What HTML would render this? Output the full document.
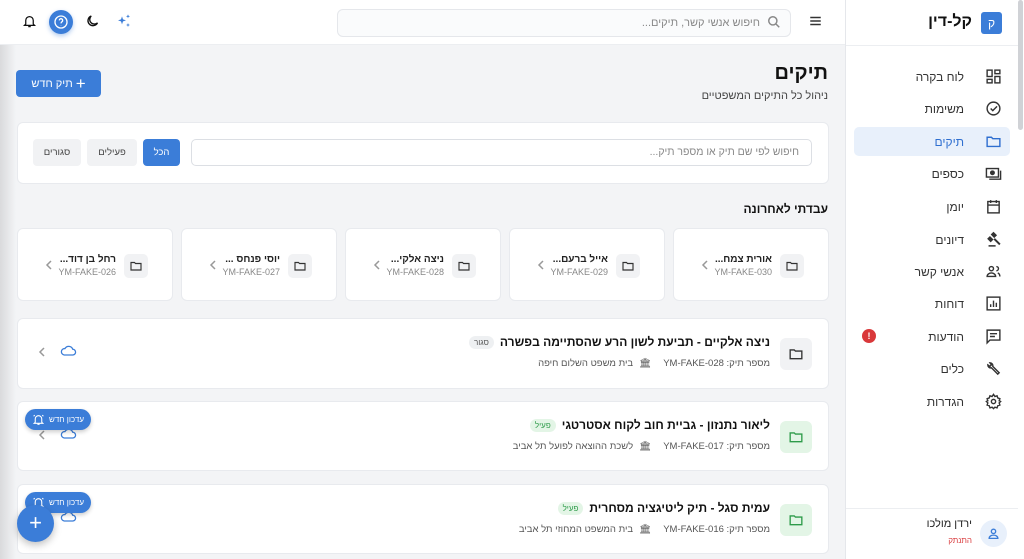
<!DOCTYPE html>
<html dir="rtl"><head><meta charset="utf-8"><style>
*{box-sizing:border-box;margin:0;padding:0}
body{width:1024px;height:559px;overflow:hidden;background:#f3f4f6;font-family:"Liberation Sans","Noto Sans CJK SC",sans-serif;color:#1f2937;position:relative}
.a{position:absolute}
.card{position:absolute;background:#fff;border:1px solid #e8eaee;border-radius:6px}
svg{display:block}
.nav{position:absolute;right:14px;width:156px;height:29px;display:flex;align-items:center;font-size:12px;color:#333}
.nav svg{position:absolute;right:8px}
.nav span{position:absolute;right:46px}
.rc .ic{position:absolute;right:24px;top:25px;width:24px;height:24px;background:#f1f2f4;border-radius:5px}
.rc .t{position:absolute;right:56px;top:25px;font-size:10px;font-weight:bold;color:#222}
.rc .s{position:absolute;right:56px;top:38px;font-size:9px;color:#888;direction:ltr}
.rc .ch{position:absolute;left:27px;top:31px}
.li .ic{position:absolute;right:16px;top:19px;width:32px;height:32px;border-radius:6px;background:#f1f2f4}
.li .ic svg{margin:9px}
.li .t{position:absolute;right:58px;top:16px;font-size:12px;font-weight:bold;color:#111;display:flex;align-items:center;gap:6px}
.li .bd{font-size:8px;font-weight:normal;padding:2px 5px;border-radius:8px;background:#eef0f2;color:#555}
.li .m{position:absolute;right:58px;top:39px;font-size:9.5px;color:#555;display:flex;align-items:center;gap:6px}
.pill{position:absolute;left:25px;width:66px;height:21px;border-radius:11px;background:#3b7dd8;color:#fff;font-size:8px;display:flex;align-items:center;justify-content:center;gap:4px;box-shadow:0 2px 4px rgba(0,0,0,.2)}
</style></head><body>
<div class="a" style="left:0;top:0;width:16px;height:559px;background:linear-gradient(to right,#d9dadc,#f3f4f6)"></div>
<div class="a" style="left:0;top:0;width:845px;height:45px;background:#fff;border-bottom:1px solid #eceef1"></div>
<div class="a" style="left:337px;top:9px;width:454px;height:28px;border:1px solid #e5e7eb;border-radius:6px;background:#fafbfc;font-size:11px;color:#888;padding-right:30px;line-height:26px">חיפוש אנשי קשר, תיקים...</div>
<svg class="a" style="left:767px;top:15px" width="14" height="14" viewBox="0 0 24 24" fill="none" stroke="#888" stroke-width="2.5"><circle cx="10" cy="10" r="7"/><path d="M15 15l6 6"/></svg>
<svg class="a" style="left:808px;top:14px" width="15" height="14" viewBox="0 0 24 24" stroke="#333" stroke-width="2.5"><path d="M3 6h18M3 12h18M3 18h18"/></svg>
<svg class="a" style="left:22px;top:13px" width="15" height="16" viewBox="0 0 24 24" fill="none" stroke="#111" stroke-width="2"><path d="M6 17V11a6 6 0 0112 0v6l2 2H4zM10 21h4"/></svg>
<div class="a" style="left:49px;top:10px;width:24px;height:24px;border-radius:50%;background:#3b7dd8;box-shadow:0 2px 5px rgba(59,125,216,.4)"></div>
<svg class="a" style="left:53px;top:14px" width="16" height="16" viewBox="0 0 24 24" fill="none" stroke="#fff" stroke-width="2"><circle cx="12" cy="12" r="9"/><path d="M9.5 9.5a2.5 2.5 0 114 2c-1 .7-1.5 1.2-1.5 2.5M12 17v.5"/></svg>
<svg class="a" style="left:85px;top:13px" width="15" height="16" viewBox="0 0 24 24" fill="none" stroke="#111" stroke-width="2.2"><path d="M20 15A8 8 0 1110 4a6 6 0 0010 11z"/></svg>
<svg class="a" style="left:116px;top:13px" width="16" height="16" viewBox="0 0 24 24" fill="#3b7dd8"><path d="M9 5l1.5 4.5L15 11l-4.5 1.5L9 17l-1.5-4.5L3 11l4.5-1.5z"/><path d="M18 2l.8 2.2L21 5l-2.2.8L18 8l-.8-2.2L15 5l2.2-.8zM18 15l.8 2.2L21 18l-2.2.8L18 21l-.8-2.2L15 18l2.2-.8z"/></svg>
<div class="a" style="left:845px;top:0;width:179px;height:559px;background:#fff;border-left:1px solid #e5e7eb"></div>
<div class="a" style="left:1018px;top:0;width:5px;height:130px;background:#d0d2d6;border-radius:3px"></div>
<div class="a" style="left:846px;top:45px;width:172px;height:1px;background:#eceef1"></div>
<div class="a" style="left:981px;top:12px;width:21px;height:22px;background:#3b7dd8;border-radius:3px;color:#fff;font-size:12px;text-align:center;line-height:22px">ק</div>
<div class="a" style="right:52px;top:13px;font-size:16px;font-weight:bold;color:#111">קל-דין</div>
<div class="a" style="left:854px;top:127px;width:156px;height:29px;background:#e8f0fb;border-radius:5px"></div>
<div class="nav" style="top:62px"><svg width="17" height="17" viewBox="0 0 24 24" fill="none" stroke="#333" stroke-width="2"><rect x="3" y="3" width="7" height="9"/><rect x="14" y="3" width="7" height="5"/><rect x="14" y="12" width="7" height="9"/><rect x="3" y="16" width="7" height="5"/></svg><span>לוח בקרה</span></div>
<div class="nav" style="top:94px"><svg width="17" height="17" viewBox="0 0 24 24" fill="none" stroke="#333" stroke-width="2"><circle cx="12" cy="12" r="9"/><path d="M8 12l3 3 6-6"/></svg><span>משימות</span></div>
<div class="nav" style="top:127px;color:#2f6fd0"><svg width="17" height="17" viewBox="0 0 24 24" fill="none" stroke="#2f6fd0" stroke-width="2"><path d="M3 6h6l2 2h10v11H3z"/></svg><span>תיקים</span></div>
<div class="nav" style="top:159px"><svg width="17" height="17" viewBox="0 0 24 24" fill="none" stroke="#333" stroke-width="2"><rect x="2" y="5" width="17" height="12"/><circle cx="10.5" cy="11" r="2.5" fill="#333"/><path d="M22 8v12H6"/></svg><span>כספים</span></div>
<div class="nav" style="top:192px"><svg width="17" height="17" viewBox="0 0 24 24" fill="none" stroke="#333" stroke-width="2"><rect x="4" y="5" width="16" height="16"/><path d="M4 10h16M8 3v4M16 3v4"/></svg><span>יומן</span></div>
<div class="nav" style="top:225px"><svg width="17" height="17" viewBox="0 0 24 24" fill="#333"><path d="M5 20h10v2H5zM8 5l4-4 5 5-4 4zM3 11l4-4 5 5-4 4zM12 12l2-2 8 8-2 2z"/></svg><span>דיונים</span></div>
<div class="nav" style="top:257px"><svg width="17" height="17" viewBox="0 0 24 24" fill="none" stroke="#333" stroke-width="2"><circle cx="9" cy="8" r="3"/><path d="M3 19c0-3 3-5 6-5s6 2 6 5zM16 5a3 3 0 010 6M18 14c2 1 3 3 3 5"/></svg><span>אנשי קשר</span></div>
<div class="nav" style="top:289px"><svg width="17" height="17" viewBox="0 0 24 24" fill="none" stroke="#333" stroke-width="2"><rect x="3" y="3" width="18" height="18"/><path d="M8 17v-4M12 17V8M16 17v-6"/></svg><span>דוחות</span></div>
<div class="nav" style="top:322px"><svg width="17" height="17" viewBox="0 0 24 24" fill="none" stroke="#333" stroke-width="2"><path d="M3 3h18v14H7l-4 4z"/><path d="M7 8h10M7 12h7"/></svg><span>הודעות</span></div>
<div class="a" style="left:862px;top:329px;width:14px;height:14px;border-radius:50%;background:#d9383a;color:#fff;font-size:9px;font-weight:bold;text-align:center;line-height:14px">!</div>
<div class="nav" style="top:354px"><svg width="17" height="17" viewBox="0 0 24 24" fill="none" stroke="#333" stroke-width="2"><path d="M4 7a4 4 0 005 4l9 9 2-2-9-9a4 4 0 00-4-5l2 3-2 2z"/></svg><span>כלים</span></div>
<div class="nav" style="top:387px"><svg width="17" height="17" viewBox="0 0 24 24" fill="none" stroke="#333" stroke-width="2"><circle cx="12" cy="12" r="3"/><path d="M12 2l2 3 3-1 1 3 3 1-1 3 2 1-2 2 1 3-3 1-1 3-3-1-2 2-2-2-3 1-1-3-3-1 1-3-2-2 2-1-1-3 3-1 1-3 3 1z"/></svg><span>הגדרות</span></div>
<div class="a" style="left:846px;top:508px;width:172px;height:1px;background:#eceef1"></div>
<div class="a" style="left:980px;top:520px;width:27px;height:27px;border-radius:50%;background:#e8f0fb"></div>
<svg class="a" style="left:987px;top:527px" width="13" height="13" viewBox="0 0 24 24" fill="none" stroke="#3b7dd8" stroke-width="2.5"><circle cx="12" cy="8" r="4"/><path d="M4 21c0-4 4-6 8-6s8 2 8 6z"/></svg>
<div class="a" style="right:52px;top:518px;font-size:11px;color:#222">ירדן מולכו</div>
<div class="a" style="right:52px;top:536px;font-size:8px;color:#d9383a">התנתק</div>
<div class="a" style="right:196px;top:62px;font-size:20px;font-weight:bold;color:#111">תיקים</div>
<div class="a" style="right:196px;top:90px;font-size:11px;color:#444">ניהול כל התיקים המשפטיים</div>
<div class="a" style="left:16px;top:70px;width:85px;height:27px;background:#3b7dd8;border-radius:4px;color:#fff;font-size:11px;display:flex;align-items:center;justify-content:center;gap:3px"><span style="font-size:17px;line-height:10px">+</span>תיק חדש</div>
<div class="card" style="left:17px;top:122px;width:812px;height:62px"></div>
<div class="a" style="left:191px;top:139px;width:621px;height:27px;border:1px solid #dcdfe4;border-radius:5px;background:#fff;font-size:10.5px;color:#888;padding-right:12px;line-height:25px">חיפוש לפי שם תיק או מספר תיק...</div>
<div class="a" style="left:143px;top:139px;width:37px;height:27px;background:#3b7dd8;border-radius:4px;color:#fff;font-size:9.5px;text-align:center;line-height:27px">הכל</div>
<div class="a" style="left:87px;top:139px;width:50px;height:27px;background:#f1f2f4;border-radius:4px;color:#444;font-size:9.5px;text-align:center;line-height:27px">פעילים</div>
<div class="a" style="left:33px;top:139px;width:48px;height:27px;background:#f1f2f4;border-radius:4px;color:#444;font-size:9.5px;text-align:center;line-height:27px">סגורים</div>
<div class="a" style="right:196px;top:202px;font-size:12px;font-weight:bold;color:#111">עבדתי לאחרונה</div>

<div class="card rc" style="left:673px;top:228px;width:156px;height:73px"><div class="ic"><svg style="margin:6px" width="12" height="12" viewBox="0 0 24 24" fill="none" stroke="#333" stroke-width="2.3"><path d="M2 5h7l2 2h11v13H2z"/></svg></div><div class="t">אורית צמח...</div><div class="s">YM-FAKE-030</div><svg class="ch" width="8" height="10" viewBox="0 0 8 10" fill="none" stroke="#999" stroke-width="1.5"><path d="M6 1L2 5l4 4"/></svg></div>
<div class="card rc" style="left:509px;top:228px;width:156px;height:73px"><div class="ic"><svg style="margin:6px" width="12" height="12" viewBox="0 0 24 24" fill="none" stroke="#333" stroke-width="2.3"><path d="M2 5h7l2 2h11v13H2z"/></svg></div><div class="t">אייל ברעם...</div><div class="s">YM-FAKE-029</div><svg class="ch" width="8" height="10" viewBox="0 0 8 10" fill="none" stroke="#999" stroke-width="1.5"><path d="M6 1L2 5l4 4"/></svg></div>
<div class="card rc" style="left:345px;top:228px;width:156px;height:73px"><div class="ic"><svg style="margin:6px" width="12" height="12" viewBox="0 0 24 24" fill="none" stroke="#333" stroke-width="2.3"><path d="M2 5h7l2 2h11v13H2z"/></svg></div><div class="t">ניצה אלקי...</div><div class="s">YM-FAKE-028</div><svg class="ch" width="8" height="10" viewBox="0 0 8 10" fill="none" stroke="#999" stroke-width="1.5"><path d="M6 1L2 5l4 4"/></svg></div>
<div class="card rc" style="left:181px;top:228px;width:156px;height:73px"><div class="ic"><svg style="margin:6px" width="12" height="12" viewBox="0 0 24 24" fill="none" stroke="#333" stroke-width="2.3"><path d="M2 5h7l2 2h11v13H2z"/></svg></div><div class="t">יוסי פנחס ...</div><div class="s">YM-FAKE-027</div><svg class="ch" width="8" height="10" viewBox="0 0 8 10" fill="none" stroke="#999" stroke-width="1.5"><path d="M6 1L2 5l4 4"/></svg></div>
<div class="card rc" style="left:17px;top:228px;width:156px;height:73px"><div class="ic"><svg style="margin:6px" width="12" height="12" viewBox="0 0 24 24" fill="none" stroke="#333" stroke-width="2.3"><path d="M2 5h7l2 2h11v13H2z"/></svg></div><div class="t">רחל בן דוד...</div><div class="s">YM-FAKE-026</div><svg class="ch" width="8" height="10" viewBox="0 0 8 10" fill="none" stroke="#999" stroke-width="1.5"><path d="M6 1L2 5l4 4"/></svg></div>

<div class="card li" style="left:17px;top:318px;width:812px;height:71px"><div class="ic"><svg width="14" height="14" viewBox="0 0 24 24" fill="none" stroke="#333" stroke-width="2.3"><path d="M2 5h7l2 2h11v13H2z"/></svg></div><div class="t">ניצה אלקיים - תביעת לשון הרע שהסתיימה בפשרה<span class="bd">סגור</span></div><div class="m"><span>מספר תיק: <span dir="ltr">YM-FAKE-028</span></span><span style="margin-right:6px">🏛</span><span>בית משפט השלום חיפה</span></div>
<svg class="a" style="left:42px;top:25px" width="17" height="12" viewBox="0 0 24 16" fill="none" stroke="#3b7dd8" stroke-width="1.8"><path d="M6 15h12a4 4 0 000-8 6 6 0 00-11-1A4.5 4.5 0 006 15z"/></svg><svg class="a" style="left:20px;top:28px" width="8" height="10" viewBox="0 0 8 10" fill="none" stroke="#999" stroke-width="1.5"><path d="M6 1L2 5l4 4"/></svg></div>

<div class="card li" style="left:17px;top:401px;width:812px;height:70px"><div class="ic" style="background:#e3f5e6"><svg width="14" height="14" viewBox="0 0 24 24" fill="none" stroke="#2e9b4a" stroke-width="2.3"><path d="M2 5h7l2 2h11v13H2z"/></svg></div><div class="t">ליאור נתנזון - גביית חוב לקוח אסטרטגי<span class="bd" style="background:#e3f5e6;color:#2e9b4a">פעיל</span></div><div class="m"><span>מספר תיק: <span dir="ltr">YM-FAKE-017</span></span><span style="margin-right:6px">🏛</span><span>לשכת ההוצאה לפועל תל אביב</span></div>
<svg class="a" style="left:42px;top:25px" width="17" height="12" viewBox="0 0 24 16" fill="none" stroke="#3b7dd8" stroke-width="1.8"><path d="M6 15h12a4 4 0 000-8 6 6 0 00-11-1A4.5 4.5 0 006 15z"/></svg><svg class="a" style="left:20px;top:28px" width="8" height="10" viewBox="0 0 8 10" fill="none" stroke="#999" stroke-width="1.5"><path d="M6 1L2 5l4 4"/></svg></div>

<div class="card li" style="left:17px;top:484px;width:812px;height:70px"><div class="ic" style="background:#e3f5e6"><svg width="14" height="14" viewBox="0 0 24 24" fill="none" stroke="#2e9b4a" stroke-width="2.3"><path d="M2 5h7l2 2h11v13H2z"/></svg></div><div class="t">עמית סגל - תיק ליטיגציה מסחרית<span class="bd" style="background:#e3f5e6;color:#2e9b4a">פעיל</span></div><div class="m"><span>מספר תיק: <span dir="ltr">YM-FAKE-016</span></span><span style="margin-right:6px">🏛</span><span>בית המשפט המחוזי תל אביב</span></div>
<svg class="a" style="left:42px;top:25px" width="17" height="12" viewBox="0 0 24 16" fill="none" stroke="#3b7dd8" stroke-width="1.8"><path d="M6 15h12a4 4 0 000-8 6 6 0 00-11-1A4.5 4.5 0 006 15z"/></svg></div>

<div class="pill" style="top:409px">עדכון חדש<svg width="13" height="13" viewBox="0 0 24 24" fill="none" stroke="#fff" stroke-width="2"><path d="M6 17V11a6 6 0 0112 0v6l2 2H4zM10 21h4M3 6l2-2M21 6l-2-2"/></svg></div>
<div class="pill" style="top:492px">עדכון חדש<svg width="13" height="13" viewBox="0 0 24 24" fill="none" stroke="#fff" stroke-width="2"><path d="M6 17V11a6 6 0 0112 0v6l2 2H4zM10 21h4M3 6l2-2M21 6l-2-2"/></svg></div>
<div class="a" style="left:17px;top:505px;width:37px;height:37px;border-radius:50%;background:#3b7dd8;color:#fff;font-size:22px;text-align:center;line-height:36px;box-shadow:0 3px 8px rgba(0,0,0,.25)">+</div>
</body></html>
